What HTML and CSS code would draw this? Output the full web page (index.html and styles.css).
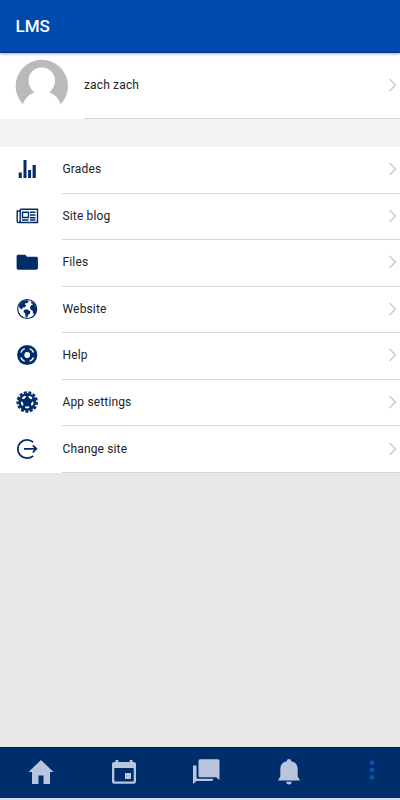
FILE: index.html
```html
<!DOCTYPE html>
<html lang="en">
<head>
<meta charset="utf-8">
<title>LMS</title>
<link rel="stylesheet" href="styles.css">
</head>
<body>
<div class="app">
  <header class="header"><h1>LMS</h1></header>
  <main class="content">
    <a class="profile">
      <svg class="avatar" viewBox="0 0 54 54"><circle cx="26.800" cy="27" r="26.200" fill="#bababa"/><path d="M26.800 8.500c7.600 0 13.200 5.600 13.200 13 0 5-2 9-5.800 12 5.500 1.800 9 5.500 11.400 11.500V54H8V45c2.400-6 6-9.700 11.500-11.500-3.800-3-5.900-7-5.900-12 0-7.400 5.600-13 13.200-13z" fill="#fff"/></svg>
      <span class="line"><span class="label">zach zach</span><svg class="chevron" viewBox="0 0 10 16"><path d="M1.500 2 7.500 8 1.500 14"/></svg></span>
    </a>
    <div class="gap"></div>
    <nav class="menu">
      <a class="row">
        <svg class="icon" viewBox="0 0 24 24"><path d="M3.700 15.500h3.100V21H3.700zM8.500 3h3v18h-3zM13.100 13h3v8h-3zM17.600 8h3.200v13h-3.200z"/></svg>
        <span class="line"><span class="label">Grades</span><svg class="chevron" viewBox="0 0 10 16"><path d="M1.500 2 7.500 8 1.500 14"/></svg></span>
      </a>
      <a class="row">
        <svg class="icon outline" viewBox="0 0 24 24"><path d="M5.200 5.200h17.300v13.300H3.400a1.200 1.200 0 0 1-1.200-1.200V7h3M5.200 5.200v11.800c0 1-.6 1.500-1.300 1.500M7.500 8.200h6v5.300h-6zM15 8.300h5.500M15 11h5.500M15 13.700h5.500M7 16h6.500M15 16h5.500"/></svg>
        <span class="line"><span class="label">Site blog</span><svg class="chevron" viewBox="0 0 10 16"><path d="M1.500 2 7.500 8 1.500 14"/></svg></span>
      </a>
      <a class="row">
        <svg class="icon" viewBox="0 0 24 24"><path d="M3.300 4.700h6.200c.8 0 1.200.3 1.600.8l.9 1.200h9.200c1 0 1.700.7 1.700 1.700v9.700c0 1-.7 1.700-1.700 1.700H3.300c-1 0-1.700-.7-1.700-1.700V6.400c0-1 .7-1.700 1.700-1.700z"/></svg>
        <span class="line"><span class="label">Files</span><svg class="chevron" viewBox="0 0 10 16"><path d="M1.500 2 7.500 8 1.500 14"/></svg></span>
      </a>
      <a class="row">
        <svg class="icon" viewBox="0 0 24 24"><circle cx="12.200" cy="12" r="9.500" fill="none" stroke="#002d68" stroke-width="1.200"/><path d="M4 8.500C5.500 5 8.500 3 12 2.900l1.800 1.600-1.500 1.700-1.800-.3-.5 1.600 1.400.9-1.900 2-1.900.2-.2 1.600-1.900-.4-1.400-1.600zM9 13l3-.8 3.500 2.200-.7 2.300-1.800 1.200-.8 3.100-1.700-1.500-.4-3.300-1.600-1.300zM16 4l4.500 4 1 5-1.500 4.500-2-1.200-.3-2.600-2-.9-.8-2.200 1.200-2.300 2-.4-1.700-1.300z"/></svg>
        <span class="line"><span class="label">Website</span><svg class="chevron" viewBox="0 0 10 16"><path d="M1.500 2 7.500 8 1.500 14"/></svg></span>
      </a>
      <a class="row">
        <svg class="icon" viewBox="0 0 24 24"><circle cx="12.200" cy="12" r="10.100"/><circle cx="12.200" cy="12" r="2.900" fill="#fff"/><path d="M9.500 5.700a6.900 6.900 0 0 1 5.400 0M9.500 18.300a6.900 6.900 0 0 0 5.400 0M5.900 9.300a6.900 6.900 0 0 0 0 5.400M18.500 9.300a6.900 6.900 0 0 1 0 5.400" transform="rotate(45 12.200 12)" fill="none" stroke="#fff" stroke-width="1.500"/></svg>
        <span class="line"><span class="label">Help</span><svg class="chevron" viewBox="0 0 10 16"><path d="M1.500 2 7.500 8 1.500 14"/></svg></span>
      </a>
      <a class="row">
        <svg class="icon" viewBox="0 0 24 24"><circle cx="12.200" cy="12" r="8.900"/><circle cx="12.200" cy="12" r="9.600" fill="none" stroke="#002d68" stroke-width="2.300" pathLength="130" stroke-dasharray="6.500 3.500"/><g fill="#fff"><ellipse cx="9" cy="7.500" rx="2.300" ry="1.100" transform="rotate(-36 9 7.500)"/><ellipse cx="15.400" cy="7.500" rx="2.300" ry="1.100" transform="rotate(36 15.400 7.500)"/><ellipse cx="17.300" cy="13.700" rx="1.100" ry="2.200" transform="rotate(18 17.300 13.700)"/><ellipse cx="7.100" cy="13.700" rx="1.100" ry="2.200" transform="rotate(-18 7.100 13.700)"/><ellipse cx="12.200" cy="17.300" rx="2.300" ry="1.100"/></g></svg>
        <span class="line"><span class="label">App settings</span><svg class="chevron" viewBox="0 0 10 16"><path d="M1.500 2 7.500 8 1.500 14"/></svg></span>
      </a>
      <a class="row">
        <svg class="icon outline exit" viewBox="0 0 24 24"><path d="M18.200 5.200a9.200 9.200 0 1 0 0 13.600M9 11.800h12M17.800 8.300l3.600 3.500-3.600 3.500"/></svg>
        <span class="line"><span class="label">Change site</span><svg class="chevron" viewBox="0 0 10 16"><path d="M1.500 2 7.500 8 1.500 14"/></svg></span>
      </a>
    </nav>
  </main>
  <nav class="tabs">
    <a class="tab"><svg viewBox="0 0 30 30"><path d="M15 3 2.500 15H6v12h6.500v-8.500h5V27H24V15h3.500z"/></svg></a>
    <a class="tab"><svg viewBox="0 0 30 30"><path fill-rule="evenodd" d="M6.500 3h2.800v2h11.400V3h2.800v2h1.300a2.200 2.200 0 0 1 2.200 2.200v17.300a2.200 2.200 0 0 1-2.200 2.200H5.200A2.200 2.200 0 0 1 3 24.500V7.200A2.200 2.200 0 0 1 5.200 5h1.300zM5.300 11v13.500h19.400V11zM16 16h6v6h-6z"/></svg></a>
    <a class="tab"><svg viewBox="0 0 30 30"><path d="M9 2.200h18a1.500 1.500 0 0 1 1.500 1.500V23l-3.500-2.800H9a1.500 1.500 0 0 1-1.500-1.500v-15A1.500 1.500 0 0 1 9 2.200zM2 8.500h3.500v12a1.200 1.200 0 0 0 1.200 1.200H22a1.600 1.600 0 0 1-1.600 2.300H5.500L2 27z"/></svg></a>
    <a class="tab"><svg viewBox="0 0 30 30"><path d="M15 2c1.300 0 2.100.8 2.200 2.200C21.500 5 23.700 8 23.700 12v7.500l2.400 4H3.900l2.400-4V12c0-4 2.200-7 6.500-7.800C12.900 2.800 13.700 2 15 2zM12.300 24.700h5.400a2.700 2.700 0 0 1-5.400 0z"/></svg></a>
    <a class="tab active"><svg viewBox="0 0 30 30"><circle cx="15" cy="5.700" r="2.500"/><circle cx="15" cy="13" r="2.500"/><circle cx="15" cy="20.200" r="2.500"/></svg></a>
  </nav>
</div>
</body>
</html>
```
FILE: styles.css
```css
* { box-sizing: border-box; }
body { margin: 0; font-family: Roboto, sans-serif; color: #222; }
.app { display: flex; flex-direction: column; width: 400px; height: 800px; background: #e8e8e8; overflow: hidden; }
.header { position: relative; flex: none; display: flex; align-items: center; height: 53px; padding-left: 15.500px; background: #004aad; border-bottom: 1px solid #00308a; box-shadow: 0 1px 3px rgba(0, 20, 80, .35); }
.header h1 { margin: 0; color: #fff; font-size: 17px; font-weight: 500; line-height: 20px; }
.content { flex: 1; min-height: 0; }
.profile { display: flex; align-items: stretch; height: 66px; padding-left: 15px; background: #fff; }
.avatar { flex: none; width: 54px; height: 54px; margin: 6px 15px 0 0; }
.line { flex: 1; display: flex; align-items: center; justify-content: space-between; padding: 0 2px 1px 0; border-bottom: 1px solid #d6d6d6; }
.label { font-size: 12px; letter-spacing: .15px; }
.row .label { padding-left: .5px; }
.profile .line { padding-bottom: 2px; }
.chevron { width: 10px; height: 16px; fill: none; stroke: #cfcfcf; stroke-width: 1.700; }
.gap { height: 28px; background: #f3f3f3; }
.row { display: flex; height: 46.550px; padding-left: 15px; background: #fff; }
.icon { flex: none; align-self: center; width: 24px; height: 24px; margin: 0 23px 2px 0; fill: #002d68; }
.outline { fill: none; stroke: #002d68; stroke-width: 1.400; }
.exit { stroke-width: 1.800; }
.tabs { flex: none; display: flex; height: 53px; background: #002e6b; border-top: 1px solid #001d56; border-bottom: 2px solid #d5def0; }
.tab { flex: 1 0 82.600px; display: flex; align-items: center; justify-content: center; padding-bottom: 2px; }
.tab svg { width: 30px; height: 30px; fill: #b8c5dc; }
.tab.active svg { fill: #0b4cad; }
```
